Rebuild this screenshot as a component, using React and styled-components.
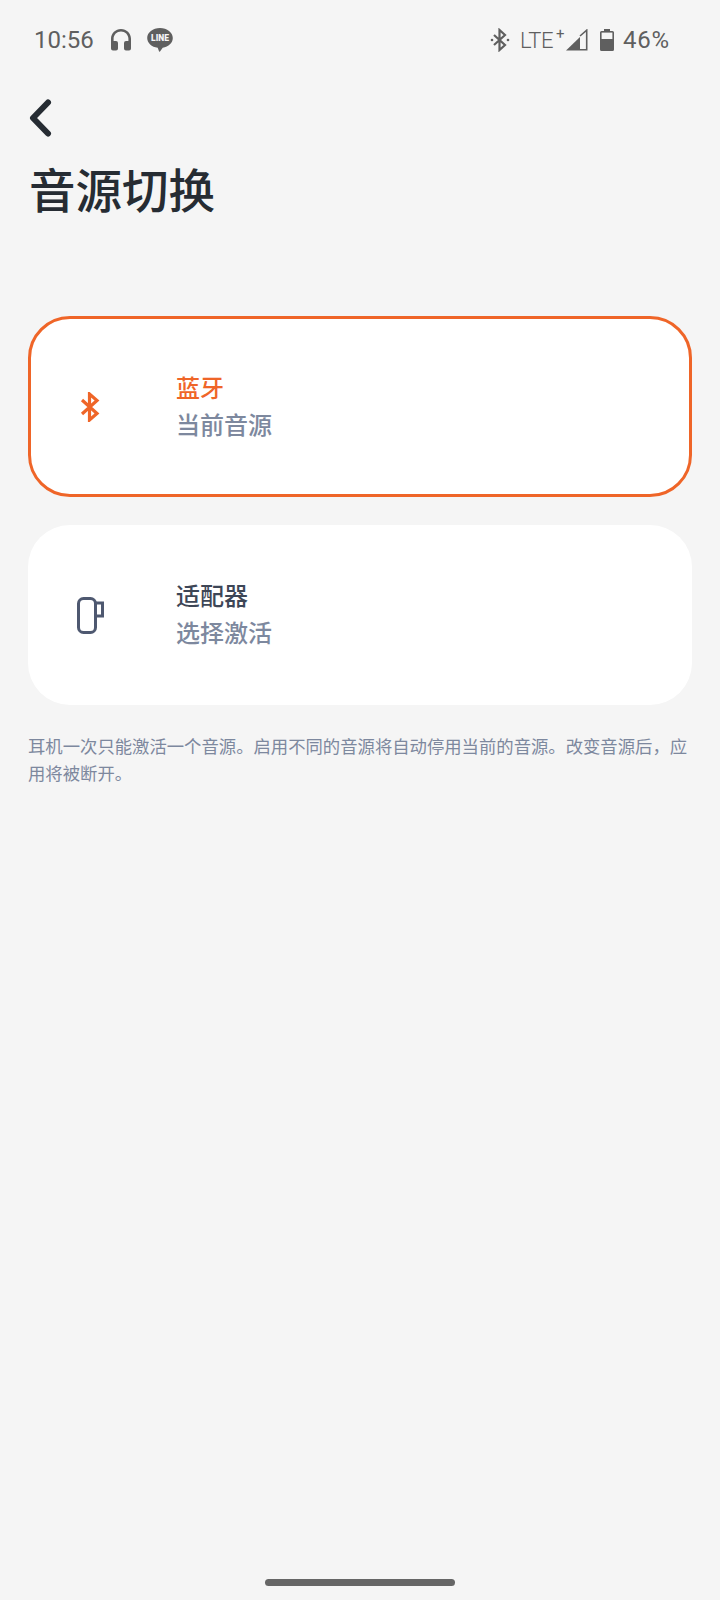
import React from 'react';
import styled, { createGlobalStyle } from 'styled-components';

const GlobalStyle = createGlobalStyle`
  html, body {
    margin: 0;
    padding: 0;
    background: #f5f5f5;
  }
`;

const Page = styled.div`
  position: relative;
  width: 720px;
  height: 1600px;
  box-sizing: border-box;
  background: #f5f5f5;
  font-family: "Noto Sans CJK SC", "Noto Sans", sans-serif;
  overflow: hidden;
`;

const StatusBar = styled.div`
  height: 80px;
  box-sizing: border-box;
  padding: 0 50px 0 34px;
  display: flex;
  align-items: center;
  justify-content: space-between;
  color: #5f5f5f;
  font-family: Roboto, sans-serif;
`;

const StatusGroup = styled.div`
  display: flex;
  align-items: center;
`;

const StatusItem = styled.span`
  display: flex;
  align-items: center;
  margin-right: ${(p) => p.$gap || 0}px;
`;

const Clock = styled.span`
  font-size: 24px;
`;

const Network = styled.span`
  font-size: 22px;
  font-weight: 300;
  position: relative;
  padding-right: 8px;
  letter-spacing: -0.4px;

  sup {
    position: absolute;
    right: -3px;
    top: -3px;
    font-size: 15px;
    font-weight: 400;
  }
`;

const Battery = styled.span`
  font-size: 24px;
  letter-spacing: 0.8px;
`;

const BackButton = styled.div`
  height: 40px;
  margin-top: 18px;
  padding-left: 28px;
  display: flex;
  align-items: center;
`;

const Title = styled.h1`
  margin: 18px 0 0 29px;
  color: #262c33;
  font-size: 46.5px;
  line-height: 64px;
  font-weight: 500;
`;

const Cards = styled.div`
  margin: 96px 28px 0;
  display: flex;
  flex-direction: column;
  gap: 28px;
`;

const Card = styled.div`
  height: ${(p) => (p.$active ? 181 : 180)}px;
  box-sizing: border-box;
  display: flex;
  align-items: center;
  background: #fff;
  border-radius: 42px;
  border: 3px solid ${(p) => (p.$active ? '#ef6528' : 'transparent')};
  padding-left: 43px;
`;

const IconBox = styled.div`
  width: 32px;
  height: 44px;
  margin-right: 70px;
  display: flex;
  align-items: center;
  justify-content: center;
`;

const CardText = styled.div`
  display: flex;
  flex-direction: column;
  margin-top: -4px;
`;

const CardTitle = styled.div`
  font-size: 24px;
  line-height: 37px;
  font-weight: 500;
  color: ${(p) => (p.$active ? '#ef6528' : '#3d4656')};
`;

const CardSub = styled.div`
  font-size: 24px;
  line-height: 37px;
  font-weight: 500;
  color: #7d889e;
`;

const Note = styled.p`
  margin: 27px 28px 0;
  width: 664px;
  font-size: 17.35px;
  line-height: 27px;
  color: #7d889e;
`;

const HomeBar = styled.div`
  position: absolute;
  left: 265px;
  bottom: 14px;
  width: 190px;
  height: 7px;
  border-radius: 4px;
  background: #666;
`;

function HeadphonesIcon() {
  return (
    <svg width="20" height="22" viewBox="0 0 20 22" fill="#5f5f5f">
      <path d="M10 0C4.500 0 0 4.300 0 9.800V19.500A2 2 0 0 0 2 21.500h3a2 2 0 0 0 2-2V14a2 2 0 0 0-2-2H2.600V9.800C2.600 5.700 5.900 2.500 10 2.500s7.400 3.200 7.400 7.300V12H15a2 2 0 0 0-2 2v5.500a2 2 0 0 0 2 2h3a2 2 0 0 0 2-2V9.800C20 4.300 15.500 0 10 0z" />
    </svg>
  );
}

function LineIcon() {
  return (
    <svg width="26" height="24" viewBox="0 0 26 24">
      <path fill="#5f5f5f" d="M13 0C5.900 0 0.200 4.500 0.200 10c0 5 4.500 9 10.500 9.800l1.300 3.500c.2.500.7.500 1 .1l2.700-3.700C21.600 18.700 25.800 14.900 25.800 10 25.800 4.500 20.100 0 13 0z" />
      <text x="13" y="13.400" textAnchor="middle" fontFamily="Roboto, sans-serif" fontSize="8.500" fontWeight="900" fill="#f5f5f5">LINE</text>
    </svg>
  );
}

function StatusBluetoothIcon() {
  return (
    <svg width="20" height="24" viewBox="0 0 20 24" fill="none" stroke="#5f5f5f" strokeWidth="2.200">
      <path d="M4 7l11 10-5.500 5V2L15 7 4 17" />
      <circle cx="2" cy="12" r="1.300" fill="#5f5f5f" stroke="none" />
      <circle cx="18" cy="12" r="1.300" fill="#5f5f5f" stroke="none" />
    </svg>
  );
}

function SignalIcon() {
  return (
    <svg width="22" height="22" viewBox="0 0 22 22">
      <path fill="#5f5f5f" d="M0 21.500 14 8v13.500z" />
      <path fill="none" stroke="#5f5f5f" strokeWidth="1.600" d="M14 7 20.700 1.200V20.700H14" />
    </svg>
  );
}

function BatteryIcon() {
  return (
    <svg width="14" height="22" viewBox="0 0 14 22">
      <path fill="#5f5f5f" d="M4 0h6v2h2.500A1.500 1.500 0 0 1 14 3.500v17a1.500 1.500 0 0 1-1.500 1.500h-11A1.500 1.500 0 0 1 0 20.500v-17A1.500 1.500 0 0 1 1.500 2H4z" />
      <rect x="1.600" y="3.600" width="10.800" height="6.400" fill="#f5f5f5" />
    </svg>
  );
}

function BackIcon() {
  return (
    <svg width="24" height="38" viewBox="0 0 24 38" fill="none" stroke="#262c33" strokeWidth="6" strokeLinecap="round" strokeLinejoin="round">
      <path d="M20 3.500 5 19l15 15.500" />
    </svg>
  );
}

function BluetoothIcon() {
  return (
    <svg width="20" height="30" viewBox="0 0 20 30" fill="none" stroke="#ef6528" strokeWidth="3.200">
      <path d="M2 8l15 13.500-7.500 6.500V2L17 8.500 2 22" />
    </svg>
  );
}

function AdapterIcon() {
  return (
    <svg width="27" height="37" viewBox="0 0 27 37" fill="none" stroke="#4e5870" strokeWidth="3">
      <rect x="1.500" y="1.500" width="17" height="34" rx="5" />
      <path d="M19 6h6.500v13H19" />
    </svg>
  );
}

export default function App() {
  return (
    <Page>
      <GlobalStyle />
      <StatusBar>
        <StatusGroup>
          <StatusItem $gap={17}><Clock>10:56</Clock></StatusItem>
          <StatusItem $gap={16}><HeadphonesIcon /></StatusItem>
          <StatusItem><LineIcon /></StatusItem>
        </StatusGroup>
        <StatusGroup>
          <StatusItem $gap={10}><StatusBluetoothIcon /></StatusItem>
          <StatusItem $gap={5}><Network>LTE<sup>+</sup></Network></StatusItem>
          <StatusItem $gap={12}><SignalIcon /></StatusItem>
          <StatusItem $gap={9}><BatteryIcon /></StatusItem>
          <Battery>46%</Battery>
        </StatusGroup>
      </StatusBar>
      <BackButton>
        <BackIcon />
      </BackButton>
      <Title>音源切换</Title>
      <Cards>
        <Card $active>
          <IconBox><BluetoothIcon /></IconBox>
          <CardText>
            <CardTitle $active>蓝牙</CardTitle>
            <CardSub>当前音源</CardSub>
          </CardText>
        </Card>
        <Card>
          <IconBox><AdapterIcon /></IconBox>
          <CardText>
            <CardTitle>适配器</CardTitle>
            <CardSub>选择激活</CardSub>
          </CardText>
        </Card>
      </Cards>
      <Note>耳机一次只能激活一个音源。启用不同的音源将自动停用当前的音源。改变音源后，应用将被断开。</Note>
      <HomeBar />
    </Page>
  );
}
